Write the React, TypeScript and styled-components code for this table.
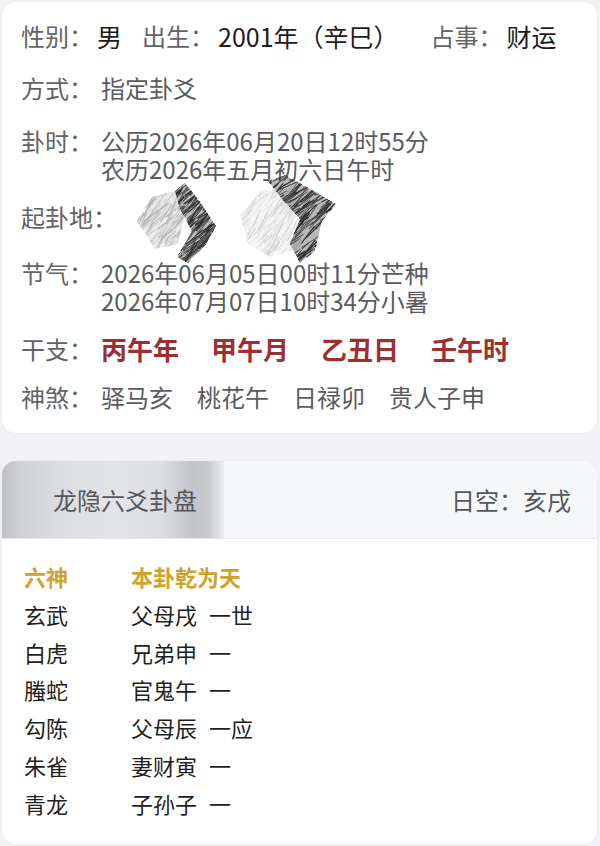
import React from "react";
import styled, { createGlobalStyle } from "styled-components";

const Global = createGlobalStyle`
  html, body { margin: 0; padding: 0; background: #f2f2f5; }
  body { font-family: "Noto Sans CJK SC", "Noto Sans", sans-serif; }
`;

const Page = styled.div`
  width: 600px;
  height: 846px;
  padding: 2px 3px 0 2px;
  box-sizing: border-box;
  display: flex;
  flex-direction: column;
  gap: 28px;
`;

const Card = styled.div`
  background: #ffffff;
  border-radius: 14px;
  box-shadow: 0 0 2px rgba(0, 0, 0, 0.06);
  overflow: hidden;
`;

const InfoBody = styled.div`
  padding: 18px 0 22px 19px;
  display: flex;
  flex-direction: column;
`;

const Row = styled.div<{ $mt: number }>`
  display: flex;
  align-items: flex-start;
  margin-top: ${(p) => p.$mt}px;
`;

const Label = styled.span<{ $lh?: number }>`
  min-width: 80px;
  font-size: 24px;
  line-height: ${(p) => p.$lh ?? 28}px;
  color: #626366;
  white-space: nowrap;
`;

const Lines = styled.div`
  display: flex;
  flex-direction: column;
`;

const Val = styled.span`
  font-size: 24px;
  line-height: 28px;
  color: #5a5b5f;
  white-space: nowrap;
`;

const Big = styled.span<{ $ml?: number }>`
  font-size: 25px;
  line-height: 32px;
  color: #1c1c1e;
  margin-left: ${(p) => p.$ml ?? 0}px;
  white-space: nowrap;
`;

const Inline = styled.span<{ $ml?: number }>`
  font-size: 24px;
  line-height: 32px;
  color: #626366;
  margin-left: ${(p) => p.$ml ?? 0}px;
  white-space: nowrap;
`;

const Items = styled.div<{ $gap: number }>`
  display: flex;
  gap: ${(p) => p.$gap}px;
`;

const GanZhi = styled.span`
  font-size: 26px;
  line-height: 28px;
  font-weight: 700;
  color: #9c2f2f;
  white-space: nowrap;
`;

const Sha = styled.span`
  font-size: 24px;
  line-height: 28px;
  color: #5a5b5f;
  white-space: nowrap;
`;

const Redact = styled.svg`
  margin: -34px 0 -34px 13px;
  display: block;
  flex-shrink: 0;
`;

const Header = styled.div`
  height: 77px;
  display: flex;
  align-items: center;
  justify-content: space-between;
  background: #f6f7f9;
  border-bottom: 1px solid #e4e5e8;
`;

const Tab = styled.div`
  width: 222px;
  height: 100%;
  display: flex;
  align-items: center;
  padding-left: 51px;
  box-sizing: border-box;
  background: linear-gradient(
    to right,
    #bfc0c4 0%,
    #cfd0d4 8%,
    #dcdde0 25%,
    #e3e4e7 50%,
    #dcdde0 72%,
    #c3c4c8 86%,
    #c9cacd 93%,
    #eeeff1 100%
  );
  font-size: 24px;
  color: #55565a;
`;

const Kong = styled.div`
  font-size: 24px;
  color: #55565a;
  padding-right: 26px;
`;

const Table = styled.div`
  padding: 19px 0 21px 22px;
  display: grid;
  grid-template-columns: 107px 1fr;
`;

const Cell = styled.span<{ $head?: boolean }>`
  display: flex;
  gap: 12px;
  font-size: 22px;
  line-height: 37.8px;
  color: ${(p) => (p.$head ? "#cfa22b" : "#1f1f22")};
  font-weight: ${(p) => (p.$head ? 700 : 400)};
  white-space: nowrap;
`;

/* ---------- redaction scribble ---------- */
function prng(seed: number) {
  let s = seed >>> 0;
  return () => {
    s = (s * 1664525 + 1013904223) >>> 0;
    return s / 4294967296;
  };
}

type Pt = [number, number];
type Region = { id: string; pts: Pt[]; colors: string[]; n: number; angle: number; seed: number; base: string };

const regions: Region[] = [
  { id: "r1", pts: [[7, 52], [22, 28], [45, 22], [55, 45], [48, 75], [25, 80]], colors: ["#c9c9c9", "#d8d8d8", "#b5b5b5", "#e4e4e4"], n: 260, angle: -0.9, seed: 11, base: "#dedede" },
  { id: "r2", pts: [[45, 22], [55, 14], [70, 33], [86, 57], [76, 75], [58, 94], [47, 88], [62, 62], [50, 40]], colors: ["#333", "#474747", "#2a2a2a", "#5c5c5c"], n: 260, angle: -0.8, seed: 29, base: "#6a6a6a" },
  { id: "r3", pts: [[110, 45], [132, 22], [160, 20], [175, 45], [170, 80], [140, 88], [118, 75]], colors: ["#dcdcdc", "#e8e8e8", "#cfcfcf", "#f0f0f0"], n: 260, angle: -0.9, seed: 47, base: "#ececec" },
  { id: "r4", pts: [[138, 12], [155, 6], [180, 20], [206, 35], [192, 52], [185, 82], [170, 94], [160, 75], [170, 50], [152, 30]], colors: ["#2f2f2f", "#444", "#262626", "#5a5a5a"], n: 300, angle: -0.7, seed: 73, base: "#646464" },
];

const strokes = regions.map((r) => {
  const rnd = prng(r.seed);
  const xs = r.pts.map((p) => p[0]);
  const ys = r.pts.map((p) => p[1]);
  const minX = Math.min(...xs) - 6, maxX = Math.max(...xs) + 6;
  const minY = Math.min(...ys) - 6, maxY = Math.max(...ys) + 6;
  const lines = [];
  for (let i = 0; i < r.n; i++) {
    const x = minX + rnd() * (maxX - minX);
    const y = minY + rnd() * (maxY - minY);
    const a = r.angle + (rnd() - 0.5) * 0.6;
    const len = 8 + rnd() * 22;
    lines.push({
      x1: x, y1: y,
      x2: x + Math.cos(a) * len, y2: y + Math.sin(a) * len,
      c: r.colors[Math.floor(rnd() * r.colors.length)],
      w: 0.6 + rnd() * 0.9,
    });
  }
  return lines;
});

const RedactMark = () => (
  <Redact width="215" height="96" viewBox="0 0 215 96">
    <defs>
      {regions.map((r) => (
        <clipPath id={r.id} key={r.id}>
          <polygon points={r.pts.map((p) => p.join(",")).join(" ")} />
        </clipPath>
      ))}
    </defs>
    {regions.map((r, i) => (
      <g key={r.id} clipPath={`url(#${r.id})`}>
        <polygon points={r.pts.map((p) => p.join(",")).join(" ")} fill={r.base} opacity="0.45" />
        {strokes[i].map((l, j) => (
          <line key={j} x1={l.x1} y1={l.y1} x2={l.x2} y2={l.y2} stroke={l.c} strokeWidth={l.w} strokeLinecap="round" />
        ))}
      </g>
    ))}
  </Redact>
);

const rows: [string, string, string][] = [
  ["玄武", "父母戌", "一世"],
  ["白虎", "兄弟申", "一"],
  ["螣蛇", "官鬼午", "一"],
  ["勾陈", "父母辰", "一应"],
  ["朱雀", "妻财寅", "一"],
  ["青龙", "子孙子", "一"],
];

export default function App() {
  return (
    <Page>
      <Global />
      <Card>
        <InfoBody>
          <Row $mt={0}>
            <Label $lh={32}>性别：</Label>
            <Big $ml={-4}>男</Big>
            <Inline $ml={20}>出生：</Inline>
            <Big $ml={4}>2001年（辛巳）</Big>
            <Inline $ml={32}>占事：</Inline>
            <Big $ml={4}>财运</Big>
          </Row>
          <Row $mt={22}>
            <Label>方式：</Label>
            <Val>指定卦爻</Val>
          </Row>
          <Row $mt={25}>
            <Label>卦时：</Label>
            <Lines>
              <Val>公历2026年06月20日12时55分</Val>
              <Val>农历2026年五月初六日午时</Val>
            </Lines>
          </Row>
          <Row $mt={20}>
            <Label>起卦地：</Label>
            <RedactMark />
          </Row>
          <Row $mt={28}>
            <Label>节气：</Label>
            <Lines>
              <Val>2026年06月05日00时11分芒种</Val>
              <Val>2026年07月07日10时34分小暑</Val>
            </Lines>
          </Row>
          <Row $mt={20}>
            <Label>干支：</Label>
            <Items $gap={32}>
              <GanZhi>丙午年</GanZhi>
              <GanZhi>甲午月</GanZhi>
              <GanZhi>乙丑日</GanZhi>
              <GanZhi>壬午时</GanZhi>
            </Items>
          </Row>
          <Row $mt={20}>
            <Label>神煞：</Label>
            <Items $gap={24}>
              <Sha>驿马亥</Sha>
              <Sha>桃花午</Sha>
              <Sha>日禄卯</Sha>
              <Sha>贵人子申</Sha>
            </Items>
          </Row>
        </InfoBody>
      </Card>
      <Card>
        <Header>
          <Tab>龙隐六爻卦盘</Tab>
          <Kong>日空：亥戌</Kong>
        </Header>
        <Table>
          <Cell $head>六神</Cell>
          <Cell $head>本卦乾为天</Cell>
          {rows.map(([a, b, c]) => (
            <React.Fragment key={a}>
              <Cell>{a}</Cell>
              <Cell>
                <span>{b}</span>
                <span>{c}</span>
              </Cell>
            </React.Fragment>
          ))}
        </Table>
      </Card>
    </Page>
  );
}
